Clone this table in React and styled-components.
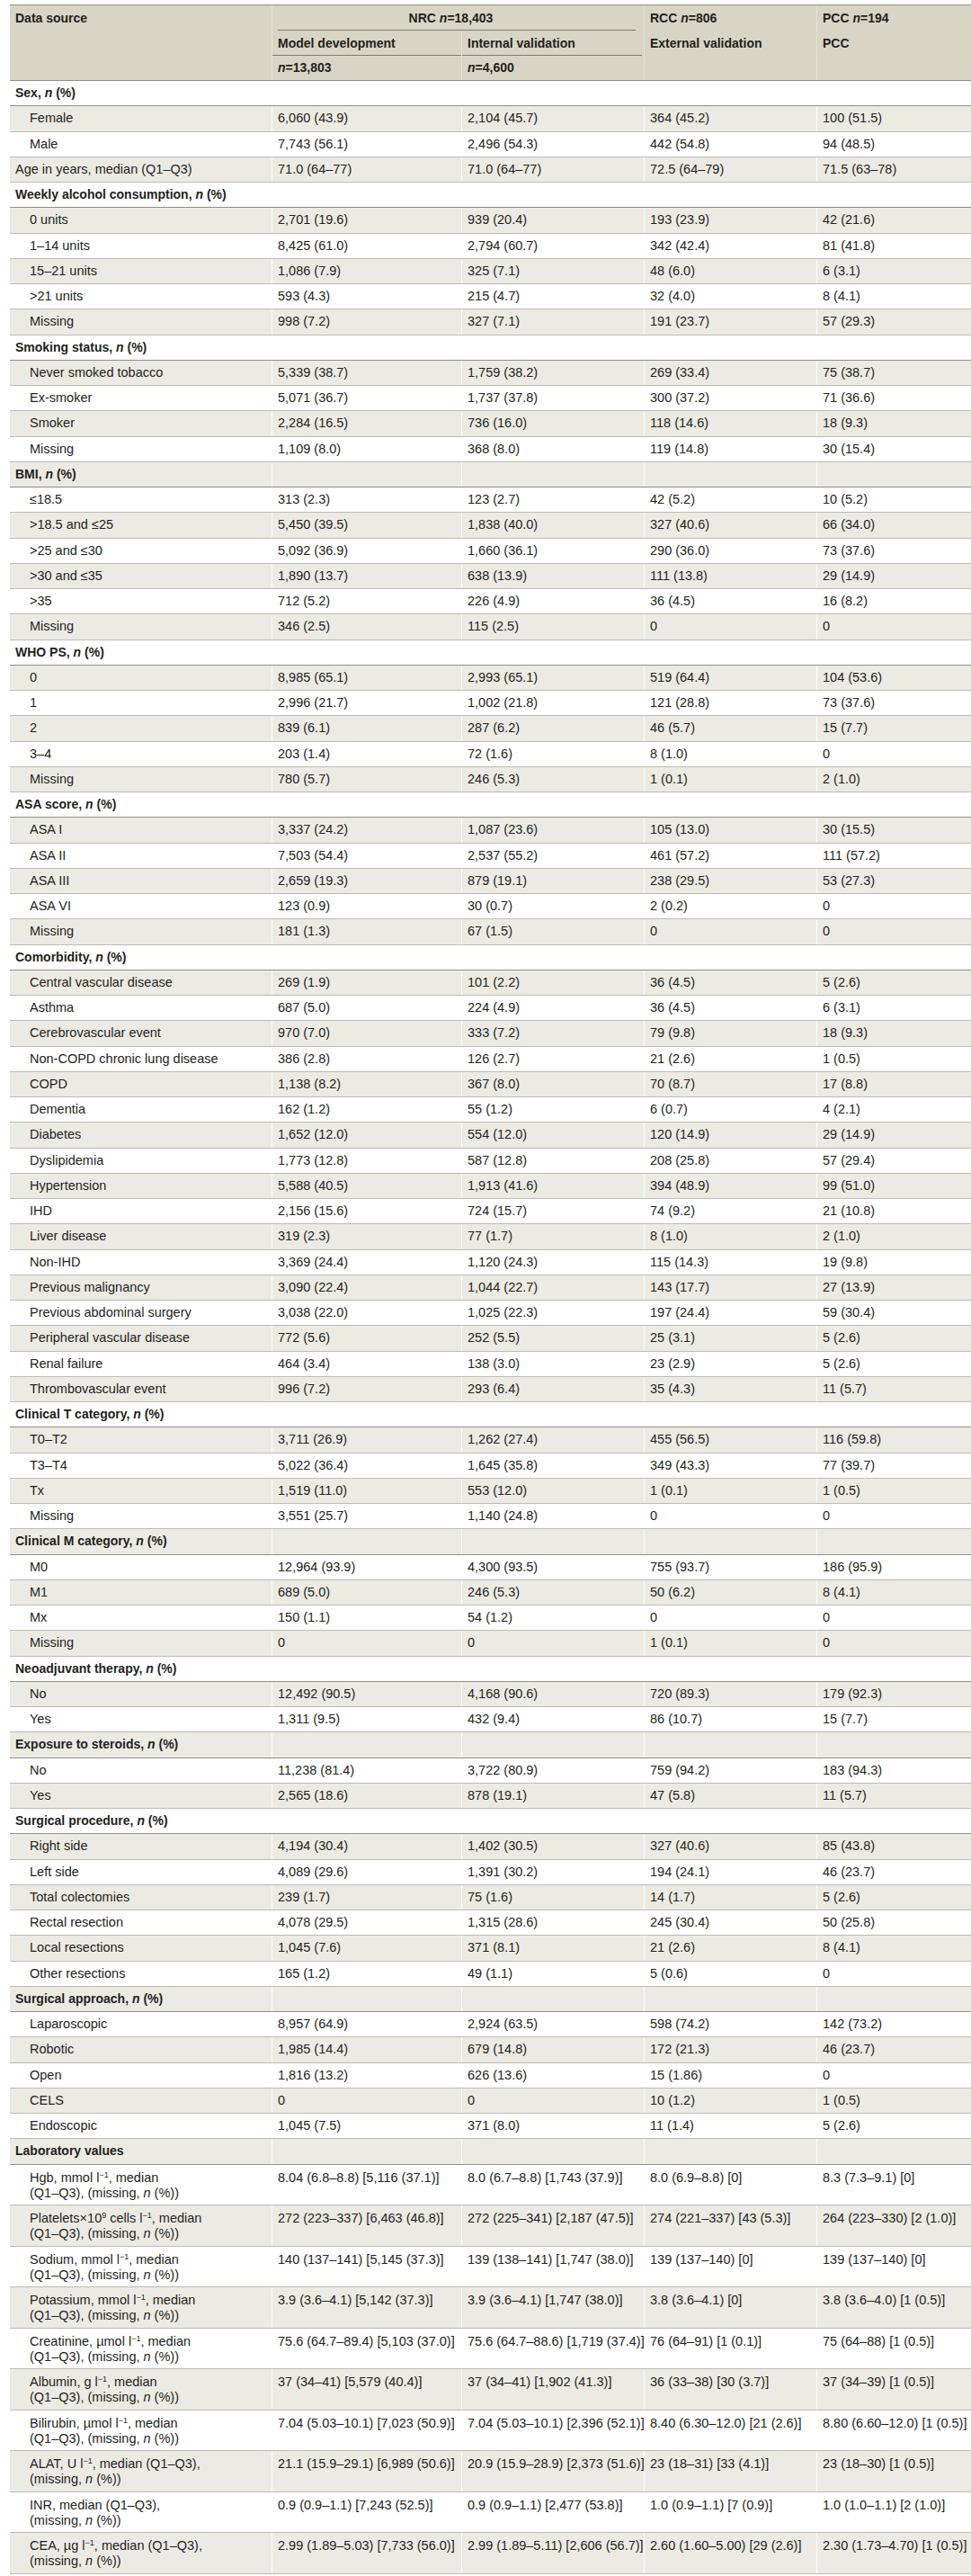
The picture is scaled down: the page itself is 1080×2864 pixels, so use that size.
import React from 'react';
import styled, { createGlobalStyle } from 'styled-components';

const GlobalStyle = createGlobalStyle`
  body {
    margin: 0;
    background: #fff;
    font-family: "Liberation Sans", Arial, sans-serif;
    color: #231f20;
  }
`;

const COLS = '291px 211px 203px 192px 172px';
const HEAD_BG = '#d8d5c4';
const STRIPE = '#ecebe3';
const DARK_LINE = '#8f8e87';
const LIGHT_LINE = '#bdbcb4';

const Page = styled.div`
  padding: 5px 0 2px 11px;
`;

const Table = styled.div`
  width: 1069px;
  font-size: 14.5px;
  line-height: 17px;
`;

const Head = styled.div`
  display: grid;
  grid-template-columns: ${COLS};
  grid-template-rows: 28px 28px 27px;
  background: ${HEAD_BG};
  border-top: 1px solid ${DARK_LINE};
  border-bottom: 1px solid ${DARK_LINE};
  font-size: 14px;
  font-weight: 700;
`;

const HeadCell = styled.div`
  grid-column: ${p => p.$col} / span ${p => p.$span || 1};
  grid-row: ${p => p.$row};
  display: flex;
  align-items: center;
  justify-content: ${p => (p.$center ? 'center' : 'flex-start')};
  padding: 0 ${p => (p.$center ? '22px' : '6px')} 0 6px;
  border-left: ${p => (p.$col > 1 ? '1px solid rgba(255,255,255,0.35)' : 'none')};
  white-space: nowrap;
  background-image: ${p => (p.$rule ? 'linear-gradient(#7d7c75, #7d7c75)' : 'none')};
  background-repeat: no-repeat;
  background-size: ${p => (p.$rule ? `calc(100% - ${p.$rule[0] + p.$rule[1]}px) 1px` : 'auto')};
  background-position: ${p => (p.$rule ? `${p.$rule[0]}px 100%` : '0 0')};
`;

const Body = styled.div``;

const Row = styled.div`
  display: grid;
  grid-template-columns: ${COLS};
  box-sizing: border-box;
  height: ${p => (p.$tall ? '45.55px' : '28.25px')};
  border-bottom: 1px solid ${p => (p.$section ? DARK_LINE : LIGHT_LINE)};
  &:nth-child(even) {
    background: ${STRIPE};
  }
`;

const Cell = styled.div`
  display: flex;
  align-items: ${p => (p.$top ? 'flex-start' : 'center')};
  padding: ${p => (p.$top ? '6px' : '0')} 4px 0 ${p => (p.$indent ? '22px' : '6px')};
  border-left: ${p => (p.$first ? 'none' : '1px solid rgba(255,255,255,0.75)')};
  white-space: nowrap;
  font-size: ${p => (p.$bold ? '14px' : 'inherit')};
  font-weight: ${p => (p.$bold ? 700 : 400)};
`;

const Sup = styled.sup`
  font-size: 9px;
  line-height: 0;
  vertical-align: 5px;
`;

const Em = styled.i`
  font-style: italic;
`;

const pct = <>, <Em>n</Em> (%)</>;
const perL = <>l<Sup>−1</Sup></>;
const missing = <>(missing, <Em>n</Em> (%))</>;

const sections = [
  {
    title: 'Sex',
    rows: [
      ['Female', '6,060 (43.9)', '2,104 (45.7)', '364 (45.2)', '100 (51.5)'],
      ['Male', '7,743 (56.1)', '2,496 (54.3)', '442 (54.8)', '94 (48.5)'],
      { flat: true, cells: ['Age in years, median (Q1–Q3)', '71.0 (64–77)', '71.0 (64–77)', '72.5 (64–79)', '71.5 (63–78)'] },
    ],
  },
  {
    title: 'Weekly alcohol consumption',
    rows: [
      ['0 units', '2,701 (19.6)', '939 (20.4)', '193 (23.9)', '42 (21.6)'],
      ['1–14 units', '8,425 (61.0)', '2,794 (60.7)', '342 (42.4)', '81 (41.8)'],
      ['15–21 units', '1,086 (7.9)', '325 (7.1)', '48 (6.0)', '6 (3.1)'],
      ['>21 units', '593 (4.3)', '215 (4.7)', '32 (4.0)', '8 (4.1)'],
      ['Missing', '998 (7.2)', '327 (7.1)', '191 (23.7)', '57 (29.3)'],
    ],
  },
  {
    title: 'Smoking status',
    rows: [
      ['Never smoked tobacco', '5,339 (38.7)', '1,759 (38.2)', '269 (33.4)', '75 (38.7)'],
      ['Ex-smoker', '5,071 (36.7)', '1,737 (37.8)', '300 (37.2)', '71 (36.6)'],
      ['Smoker', '2,284 (16.5)', '736 (16.0)', '118 (14.6)', '18 (9.3)'],
      ['Missing', '1,109 (8.0)', '368 (8.0)', '119 (14.8)', '30 (15.4)'],
    ],
  },
  {
    title: 'BMI',
    rows: [
      ['≤18.5', '313 (2.3)', '123 (2.7)', '42 (5.2)', '10 (5.2)'],
      ['>18.5 and ≤25', '5,450 (39.5)', '1,838 (40.0)', '327 (40.6)', '66 (34.0)'],
      ['>25 and ≤30', '5,092 (36.9)', '1,660 (36.1)', '290 (36.0)', '73 (37.6)'],
      ['>30 and ≤35', '1,890 (13.7)', '638 (13.9)', '111 (13.8)', '29 (14.9)'],
      ['>35', '712 (5.2)', '226 (4.9)', '36 (4.5)', '16 (8.2)'],
      ['Missing', '346 (2.5)', '115 (2.5)', '0', '0'],
    ],
  },
  {
    title: 'WHO PS',
    rows: [
      ['0', '8,985 (65.1)', '2,993 (65.1)', '519 (64.4)', '104 (53.6)'],
      ['1', '2,996 (21.7)', '1,002 (21.8)', '121 (28.8)', '73 (37.6)'],
      ['2', '839 (6.1)', '287 (6.2)', '46 (5.7)', '15 (7.7)'],
      ['3–4', '203 (1.4)', '72 (1.6)', '8 (1.0)', '0'],
      ['Missing', '780 (5.7)', '246 (5.3)', '1 (0.1)', '2 (1.0)'],
    ],
  },
  {
    title: 'ASA score',
    rows: [
      ['ASA I', '3,337 (24.2)', '1,087 (23.6)', '105 (13.0)', '30 (15.5)'],
      ['ASA II', '7,503 (54.4)', '2,537 (55.2)', '461 (57.2)', '111 (57.2)'],
      ['ASA III', '2,659 (19.3)', '879 (19.1)', '238 (29.5)', '53 (27.3)'],
      ['ASA VI', '123 (0.9)', '30 (0.7)', '2 (0.2)', '0'],
      ['Missing', '181 (1.3)', '67 (1.5)', '0', '0'],
    ],
  },
  {
    title: 'Comorbidity',
    rows: [
      ['Central vascular disease', '269 (1.9)', '101 (2.2)', '36 (4.5)', '5 (2.6)'],
      ['Asthma', '687 (5.0)', '224 (4.9)', '36 (4.5)', '6 (3.1)'],
      ['Cerebrovascular event', '970 (7.0)', '333 (7.2)', '79 (9.8)', '18 (9.3)'],
      ['Non-COPD chronic lung disease', '386 (2.8)', '126 (2.7)', '21 (2.6)', '1 (0.5)'],
      ['COPD', '1,138 (8.2)', '367 (8.0)', '70 (8.7)', '17 (8.8)'],
      ['Dementia', '162 (1.2)', '55 (1.2)', '6 (0.7)', '4 (2.1)'],
      ['Diabetes', '1,652 (12.0)', '554 (12.0)', '120 (14.9)', '29 (14.9)'],
      ['Dyslipidemia', '1,773 (12.8)', '587 (12.8)', '208 (25.8)', '57 (29.4)'],
      ['Hypertension', '5,588 (40.5)', '1,913 (41.6)', '394 (48.9)', '99 (51.0)'],
      ['IHD', '2,156 (15.6)', '724 (15.7)', '74 (9.2)', '21 (10.8)'],
      ['Liver disease', '319 (2.3)', '77 (1.7)', '8 (1.0)', '2 (1.0)'],
      ['Non-IHD', '3,369 (24.4)', '1,120 (24.3)', '115 (14.3)', '19 (9.8)'],
      ['Previous malignancy', '3,090 (22.4)', '1,044 (22.7)', '143 (17.7)', '27 (13.9)'],
      ['Previous abdominal surgery', '3,038 (22.0)', '1,025 (22.3)', '197 (24.4)', '59 (30.4)'],
      ['Peripheral vascular disease', '772 (5.6)', '252 (5.5)', '25 (3.1)', '5 (2.6)'],
      ['Renal failure', '464 (3.4)', '138 (3.0)', '23 (2.9)', '5 (2.6)'],
      ['Thrombovascular event', '996 (7.2)', '293 (6.4)', '35 (4.3)', '11 (5.7)'],
    ],
  },
  {
    title: 'Clinical T category',
    rows: [
      ['T0–T2', '3,711 (26.9)', '1,262 (27.4)', '455 (56.5)', '116 (59.8)'],
      ['T3–T4', '5,022 (36.4)', '1,645 (35.8)', '349 (43.3)', '77 (39.7)'],
      ['Tx', '1,519 (11.0)', '553 (12.0)', '1 (0.1)', '1 (0.5)'],
      ['Missing', '3,551 (25.7)', '1,140 (24.8)', '0', '0'],
    ],
  },
  {
    title: 'Clinical M category',
    rows: [
      ['M0', '12,964 (93.9)', '4,300 (93.5)', '755 (93.7)', '186 (95.9)'],
      ['M1', '689 (5.0)', '246 (5.3)', '50 (6.2)', '8 (4.1)'],
      ['Mx', '150 (1.1)', '54 (1.2)', '0', '0'],
      ['Missing', '0', '0', '1 (0.1)', '0'],
    ],
  },
  {
    title: 'Neoadjuvant therapy',
    rows: [
      ['No', '12,492 (90.5)', '4,168 (90.6)', '720 (89.3)', '179 (92.3)'],
      ['Yes', '1,311 (9.5)', '432 (9.4)', '86 (10.7)', '15 (7.7)'],
    ],
  },
  {
    title: 'Exposure to steroids',
    rows: [
      ['No', '11,238 (81.4)', '3,722 (80.9)', '759 (94.2)', '183 (94.3)'],
      ['Yes', '2,565 (18.6)', '878 (19.1)', '47 (5.8)', '11 (5.7)'],
    ],
  },
  {
    title: 'Surgical procedure',
    rows: [
      ['Right side', '4,194 (30.4)', '1,402 (30.5)', '327 (40.6)', '85 (43.8)'],
      ['Left side', '4,089 (29.6)', '1,391 (30.2)', '194 (24.1)', '46 (23.7)'],
      ['Total colectomies', '239 (1.7)', '75 (1.6)', '14 (1.7)', '5 (2.6)'],
      ['Rectal resection', '4,078 (29.5)', '1,315 (28.6)', '245 (30.4)', '50 (25.8)'],
      ['Local resections', '1,045 (7.6)', '371 (8.1)', '21 (2.6)', '8 (4.1)'],
      ['Other resections', '165 (1.2)', '49 (1.1)', '5 (0.6)', '0'],
    ],
  },
  {
    title: 'Surgical approach',
    rows: [
      ['Laparoscopic', '8,957 (64.9)', '2,924 (63.5)', '598 (74.2)', '142 (73.2)'],
      ['Robotic', '1,985 (14.4)', '679 (14.8)', '172 (21.3)', '46 (23.7)'],
      ['Open', '1,816 (13.2)', '626 (13.6)', '15 (1.86)', '0'],
      ['CELS', '0', '0', '10 (1.2)', '1 (0.5)'],
      ['Endoscopic', '1,045 (7.5)', '371 (8.0)', '11 (1.4)', '5 (2.6)'],
    ],
  },
  {
    title: 'Laboratory values',
    plain: true,
    rows: [
      { tall: true, cells: [<>Hgb, mmol {perL}, median<br />(Q1–Q3), {missing}</>, '8.04 (6.8–8.8) [5,116 (37.1)]', '8.0 (6.7–8.8) [1,743 (37.9)]', '8.0 (6.9–8.8) [0]', '8.3 (7.3–9.1) [0]'] },
      { tall: true, cells: [<>Platelets×10<Sup>9</Sup> cells {perL}, median<br />(Q1–Q3), {missing}</>, '272 (223–337) [6,463 (46.8)]', '272 (225–341) [2,187 (47.5)]', '274 (221–337) [43 (5.3)]', '264 (223–330) [2 (1.0)]'] },
      { tall: true, cells: [<>Sodium, mmol {perL}, median<br />(Q1–Q3), {missing}</>, '140 (137–141) [5,145 (37.3)]', '139 (138–141) [1,747 (38.0)]', '139 (137–140) [0]', '139 (137–140) [0]'] },
      { tall: true, cells: [<>Potassium, mmol {perL}, median<br />(Q1–Q3), {missing}</>, '3.9 (3.6–4.1) [5,142 (37.3)]', '3.9 (3.6–4.1) [1,747 (38.0)]', '3.8 (3.6–4.1) [0]', '3.8 (3.6–4.0) [1 (0.5)]'] },
      { tall: true, cells: [<>Creatinine, µmol {perL}, median<br />(Q1–Q3), {missing}</>, '75.6 (64.7–89.4) [5,103 (37.0)]', '75.6 (64.7–88.6) [1,719 (37.4)]', '76 (64–91) [1 (0.1)]', '75 (64–88) [1 (0.5)]'] },
      { tall: true, cells: [<>Albumin, g {perL}, median<br />(Q1–Q3), {missing}</>, '37 (34–41) [5,579 (40.4)]', '37 (34–41) [1,902 (41.3)]', '36 (33–38) [30 (3.7)]', '37 (34–39) [1 (0.5)]'] },
      { tall: true, cells: [<>Bilirubin, µmol {perL}, median<br />(Q1–Q3), {missing}</>, '7.04 (5.03–10.1) [7,023 (50.9)]', '7.04 (5.03–10.1) [2,396 (52.1)]', '8.40 (6.30–12.0) [21 (2.6)]', '8.80 (6.60–12.0) [1 (0.5)]'] },
      { tall: true, cells: [<>ALAT, U {perL}, median (Q1–Q3),<br />{missing}</>, '21.1 (15.9–29.1) [6,989 (50.6)]', '20.9 (15.9–28.9) [2,373 (51.6)]', '23 (18–31) [33 (4.1)]', '23 (18–30) [1 (0.5)]'] },
      { tall: true, cells: [<>INR, median (Q1–Q3),<br />{missing}</>, '0.9 (0.9–1.1) [7,243 (52.5)]', '0.9 (0.9–1.1) [2,477 (53.8)]', '1.0 (0.9–1.1) [7 (0.9)]', '1.0 (1.0–1.1) [2 (1.0)]'] },
      { tall: true, cells: [<>CEA, µg {perL}, median (Q1–Q3),<br />{missing}</>, '2.99 (1.89–5.03) [7,733 (56.0)]', '2.99 (1.89–5.11) [2,606 (56.7)]', '2.60 (1.60–5.00) [29 (2.6)]', '2.30 (1.73–4.70) [1 (0.5)]'] },
    ],
  },
];

function DataRow({ row }) {
  const cells = Array.isArray(row) ? row : row.cells;
  const tall = !Array.isArray(row) && row.tall;
  const flat = !Array.isArray(row) && row.flat;
  return (
    <Row $tall={tall}>
      {cells.map((c, i) => (
        <Cell key={i} $first={i === 0} $indent={i === 0 && !flat} $top={tall}>
          <span>{c}</span>
        </Cell>
      ))}
    </Row>
  );
}

export default function App() {
  const rows = [];
  sections.forEach((s, si) => {
    rows.push(
      <Row key={`s${si}`} $section>
        <Cell $first $bold>
          <span>
            {s.title}
            {!s.plain && pct}
          </span>
        </Cell>
        <Cell />
        <Cell />
        <Cell />
        <Cell />
      </Row>
    );
    s.rows.forEach((r, ri) => rows.push(<DataRow key={`r${si}-${ri}`} row={r} />));
  });

  return (
    <Page>
      <GlobalStyle />
      <Table>
        <Head>
          <HeadCell $col={1} $row={1}>Data source</HeadCell>
          <HeadCell $col={2} $span={2} $row={1} $center $rule={[6, 9]}>
            NRC&nbsp;<Em>n</Em>=18,403
          </HeadCell>
          <HeadCell $col={4} $row={1}>RCC&nbsp;<Em>n</Em>=806</HeadCell>
          <HeadCell $col={5} $row={1}>PCC&nbsp;<Em>n</Em>=194</HeadCell>

          <HeadCell $col={2} $row={2} $rule={[0, 0]}>Model development</HeadCell>
          <HeadCell $col={3} $row={2} $rule={[0, 2]}>Internal validation</HeadCell>
          <HeadCell $col={4} $row={2}>External validation</HeadCell>
          <HeadCell $col={5} $row={2}>PCC</HeadCell>

          <HeadCell $col={2} $row={3}><Em>n</Em>=13,803</HeadCell>
          <HeadCell $col={3} $row={3}><Em>n</Em>=4,600</HeadCell>
          <HeadCell $col={4} $row={3} />
          <HeadCell $col={5} $row={3} />
        </Head>
        <Body>{rows}</Body>
      </Table>
    </Page>
  );
}
